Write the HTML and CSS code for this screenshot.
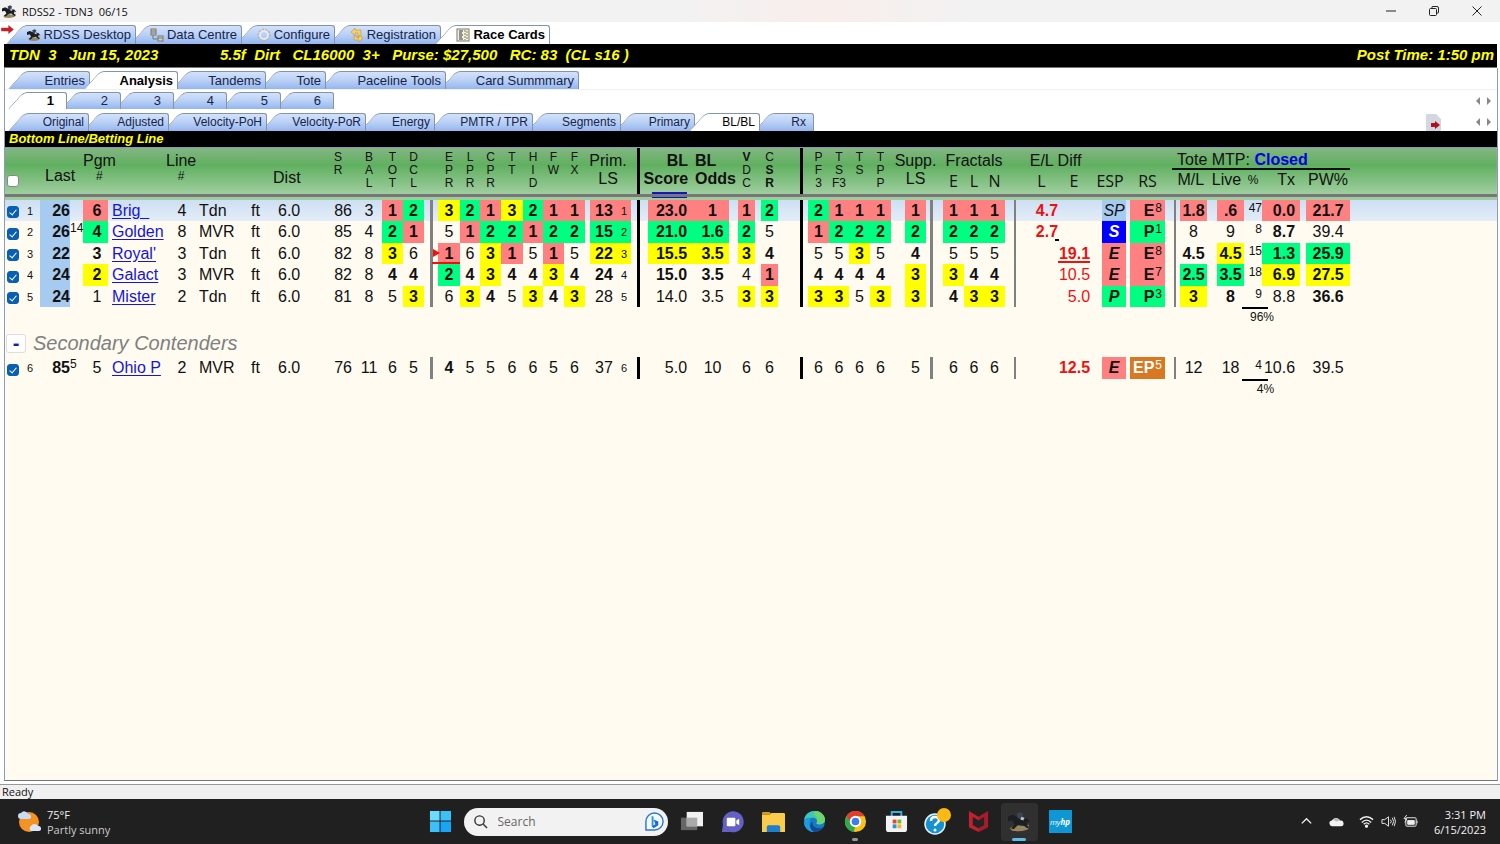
FILE: index.html
```html
<!DOCTYPE html>
<html lang="en">
<head>
    <meta charset="UTF-8">
    <meta name="viewport" content="width=device-width, initial-scale=1.0">
    <title>RDSS2 - TDN3 06/15</title>
    <link rel="stylesheet" href="styles.css">
</head>
<body>
    <!-- shared icons -->
    <svg class="defs" width="0" height="0">
        <symbol id="horse" viewBox="0 0 24 24">
            <path d="M2 19q4-4 9-3 6 2 11-1l-1 5q-6 3-13 2-4 0-6-3z" fill="#8d8a68"/>
            <path d="M0 7l5-2 4 2 6 1 5 1 3 4-3-1-1 3 3 3-2 1-5-4-5 1-4 4-3-1 4-4-2-4-2 0-3 1z" fill="#1b1e22"/>
            <path d="M9 4l4-2 3 2-1 3 4 2-6 1-3-2z" fill="#3c4550"/>
            <path d="M14 7l3 1-1 3-3-1z" fill="#b9c4cf"/>
            <path d="M4 21q8-3 16-1" stroke="#c0743a" fill="none"/>
        </symbol>
    </svg>

    <header class="titlebar">
        <svg class="app-icon"><use href="#horse"/></svg>
        <span class="title">RDSS2 - TDN3&nbsp; 06/15</span>
        <button class="win-btn" aria-label="Minimize"><svg viewBox="0 0 12 12"><path d="M1 6h10"/></svg></button>
        <button class="win-btn" aria-label="Restore"><svg viewBox="0 0 12 12"><rect x="1.500" y="3.500" width="7" height="7" rx="1"/><path d="M4 3.500V2q0-.5.5-.5H9q1.500 0 1.500 1.500v4.500q0 .5-.5.5H9"/></svg></button>
        <button class="win-btn" aria-label="Close"><svg viewBox="0 0 12 12"><path d="M1.500 1.500l9 9M10.500 1.500l-9 9"/></svg></button>
    </header>

    <nav class="tabs tabs-main">
        <svg class="marker" viewBox="0 0 14 10"><path d="M0 3h8V0l6 5-6 5V7H0z" fill="#c4202c"/></svg>
        <button class="tab"><svg class="tab-icon"><use href="#horse"/></svg>RDSS Desktop</button>
        <button class="tab"><svg class="tab-icon" viewBox="0 0 14 14" fill="#d6d3b8" stroke="#777"><path d="M3 5v6h5" fill="none"/><rect x="1" y="1" width="5" height="6"/><path d="M1 3h5M1 5h5"/><rect x="8" y="8" width="5" height="5"/><path d="M8 10h5"/></svg>Data Centre</button>
        <button class="tab"><svg class="tab-icon" viewBox="0 0 14 14" fill="none"><circle cx="7" cy="7" r="5" stroke="#b5b5b5" stroke-width="3" stroke-dasharray="2 1"/><circle cx="7" cy="7" r="4" stroke="#e9e9e9" stroke-width="2"/></svg>Configure</button>
        <button class="tab"><svg class="tab-icon" viewBox="0 0 14 14" fill="#f7cf68" stroke="#b98a24" stroke-width=".5"><path d="M1 4l4-4v2h6v7H8V5H5v3z"/><path d="M13 10l-4 4v-2H4V8h3v2h2V7z"/></svg>Registration</button>
        <button class="tab active"><svg class="tab-icon" viewBox="0 0 14 14"><rect x="1" y="1" width="12" height="12" fill="#f4f2e4" stroke="#777"/><path d="M3 3h4M3 5h3M3 7h4M3 9h3M3 11h4" stroke="#333"/><path d="M9 2v10M11 3v8" stroke="#887f3c" stroke-dasharray="2 1"/></svg>Race Cards</button>
    </nav>

    <div class="race-bar">
        <span class="race-date">TDN&nbsp; 3&nbsp;&nbsp; Jun 15, 2023</span>
        <span>5.5f&nbsp; Dirt&nbsp;&nbsp; CL16000&nbsp; 3+&nbsp;&nbsp; Purse: $27,500&nbsp;&nbsp; RC: 83&nbsp; (CL s16 )</span>
        <span class="post-time">Post Time: 1:50 pm</span>
    </div>

    <main class="card">
        <nav class="tabs tabs-card">
            <button class="tab">Entries</button>
            <button class="tab active">Analysis</button>
            <button class="tab">Tandems</button>
            <button class="tab">Tote</button>
            <button class="tab">Paceline Tools</button>
            <button class="tab">Card Summmary</button>
        </nav>
        <nav class="tabs tabs-race">
            <button class="tab active">1</button>
            <button class="tab">2</button>
            <button class="tab">3</button>
            <button class="tab">4</button>
            <button class="tab">5</button>
            <button class="tab">6</button>
            <div class="scroll">
                <button aria-label="Previous race"><svg viewBox="0 0 4 8"><path d="M4 0v8L0 4z"/></svg></button>
                <button aria-label="Next race"><svg viewBox="0 0 4 8"><path d="M0 0v8l4-4z"/></svg></button>
            </div>
        </nav>
        <nav class="tabs tabs-view">
            <button class="tab">Original</button>
            <button class="tab">Adjusted</button>
            <button class="tab">Velocity-PoH</button>
            <button class="tab">Velocity-PoR</button>
            <button class="tab">Energy</button>
            <button class="tab">PMTR / TPR</button>
            <button class="tab">Segments</button>
            <button class="tab">Primary</button>
            <button class="tab active">BL/BL</button>
            <button class="tab">Rx</button>
            <div class="scroll">
                <button class="export" aria-label="Export"><svg viewBox="0 0 15 17"><path d="M0 0h11l4 4v13H0z" fill="#d3d7e2"/><path d="M10 0l5 5V0z" fill="#fff"/><path d="M5 9h4V7l5 4-5 4v-2H5z" fill="#b0101c"/></svg></button>
                <button aria-label="Previous view"><svg viewBox="0 0 4 8"><path d="M4 0v8L0 4z"/></svg></button>
                <button aria-label="Next view"><svg viewBox="0 0 4 8"><path d="M0 0v8l4-4z"/></svg></button>
            </div>
        </nav>

        <h1 class="view-title">Bottom Line/Betting Line</h1>

        <table class="lines">
            <colgroup>
                <col class="w17"><col class="w18"><col class="w30"><col class="w13"><col class="w25"><col class="w58"><col class="w28"><col class="w52"><col class="w24"><col class="w50">
                <col class="w36"><col class="w26"><col class="w21"><col class="w21"><col class="w14">
                <col class="w22"><col class="w20"><col class="w21"><col class="w22"><col class="w20"><col class="w21"><col class="w21"><col class="w32"><col class="w14"><col class="w9">
                <col class="w50"><col class="w48"><col class="w17"><col class="w23"><col class="w30">
                <col class="w21"><col class="w20"><col class="w21"><col class="w21"><col class="w35"><col class="w17">
                <col class="w21"><col class="w20"><col class="w21"><col class="w20">
                <col class="w33"><col class="w32"><col class="w40"><col class="w35"><col class="w15">
                <col class="w27"><col class="w37"><col class="w18"><col class="w44"><col class="w44"><col>
            </colgroup>
            <thead>
                <tr class="head-top">
                    <th rowspan="2" colspan="2" class="check-all"><input type="checkbox" aria-label="Select all"></th>
                    <th rowspan="2" colspan="2" class="last-head">Last</th>
                    <th rowspan="2" colspan="2" class="two left"><span>Pgm<small>#</small></span></th>
                    <th rowspan="2" colspan="3" class="two left"><span>Line<small>#</small></span></th>
                    <th rowspan="2" class="dist-head">Dist</th>
                    <th rowspan="2" class="vert">S<br>R</th>
                    <th rowspan="2" class="vert">B<br>A<br>L</th>
                    <th rowspan="2" class="vert">T<br>O<br>T</th>
                    <th rowspan="2" class="vert">D<br>C<br>L</th>
                    <th rowspan="2"></th>
                    <th rowspan="2" class="vert">E<br>P<br>R</th>
                    <th rowspan="2" class="vert">L<br>P<br>R</th>
                    <th rowspan="2" class="vert">C<br>P<br>R</th>
                    <th rowspan="2" class="vert">T<br>T</th>
                    <th rowspan="2" class="vert">H<br>I<br>D</th>
                    <th rowspan="2" class="vert">F<br>W</th>
                    <th rowspan="2" class="vert">F<br>X</th>
                    <th rowspan="2" colspan="2" class="two">Prim.<br>LS</th>
                    <th rowspan="2" class="bar-prim"></th>
                    <th rowspan="2" class="two bl sorted">BL<br>Score</th>
                    <th rowspan="2" class="two bl odds-head">BL<br>Odds</th>
                    <th rowspan="2" class="vert"><b>V</b><br>D<br>C</th>
                    <th rowspan="2" class="vert csr">C<br><b>S</b><br><b>R</b></th>
                    <th rowspan="2" class="bar-bl"></th>
                    <th rowspan="2" class="vert">P<br>F<br>3</th>
                    <th rowspan="2" class="vert">T<br>S<br>F3</th>
                    <th rowspan="2" class="vert">T<br>S</th>
                    <th rowspan="2" class="vert">T<br>P<br>P</th>
                    <th rowspan="2" colspan="2" class="two supp-head">Supp.<br>LS</th>
                    <th colspan="3">Fractals</th>
                    <th></th>
                    <th colspan="2" class="diff-head">E/L Diff</th>
                    <th colspan="2"></th>
                    <th colspan="6" class="tote"><div>Tote MTP: <b>Closed</b></div></th>
                    <th></th>
                </tr>
                <tr class="head-low">
                    <th class="ui">E</th>
                    <th class="ui">L</th>
                    <th class="ui">N</th>
                    <th></th>
                    <th class="ui">L</th>
                    <th class="ui">E</th>
                    <th class="ui">ESP</th>
                    <th class="ui">RS</th>
                    <th colspan="2" class="ml-head">M/L</th>
                    <th class="live-head">Live</th>
                    <th class="small">%</th>
                    <th class="tx-head">Tx</th>
                    <th>PW%</th>
                    <th></th>
                </tr>
            </thead>
            <tbody>
                <tr class="horse selected">
                    <td><input type="checkbox" aria-label="Brig" checked></td><td class="idx">1</td><td class="last">26</td><td class="ago"></td><td class="pgm r">6</td><td class="name"><a href="#">Brig&nbsp;&nbsp;</a></td><td class="line">4</td><td class="trk">Tdn</td><td class="trk">ft</td><td class="dist">6.0</td>
                    <td class="sr">86</td><td>3</td><td class="r">1</td><td class="g">2</td><td class="bar-tot"></td>
                    <td class="y">3</td><td class="g">2</td><td class="r">1</td><td class="y">3</td><td class="g">2</td><td class="r">1</td><td class="r">1</td><td class="ls r">13</td><td class="rank r">1</td><td class="bar-prim"></td>
                    <td class="score r">23.0</td><td class="odds r">1</td><td class="r">1</td><td class="csr g">2</td><td class="bar-bl"></td>
                    <td class="g">2</td><td class="r">1</td><td class="r">1</td><td class="r">1</td><td class="supp r">1</td><td class="bar-supp"></td>
                    <td class="r">1</td><td class="r">1</td><td class="r">1</td><td class="bar-frac"></td>
                    <td class="diff b">4.7</td><td class="diff"></td><td class="esp sp">SP</td><td class="rs r">E<sup>8</sup></td><td class="bar-rs"></td>
                    <td class="r">1.8</td><td class="live r">.6</td><td class="pct">47</td><td class="tx r">0.0</td><td class="r">21.7</td><td></td>
                </tr>
                <tr class="horse">
                    <td><input type="checkbox" aria-label="Golden" checked></td><td class="idx">2</td><td class="last">26</td><td class="ago">14</td><td class="pgm g">4</td><td class="name"><a href="#">Golden</a></td><td class="line">8</td><td class="trk">MVR</td><td class="trk">ft</td><td class="dist">6.0</td>
                    <td class="sr">85</td><td>4</td><td class="g">2</td><td class="r">1</td><td class="bar-tot"></td>
                    <td>5</td><td class="r">1</td><td class="g">2</td><td class="g">2</td><td class="r">1</td><td class="g">2</td><td class="g">2</td><td class="ls g">15</td><td class="rank g">2</td><td class="bar-prim"></td>
                    <td class="score g">21.0</td><td class="odds g">1.6</td><td class="g">2</td><td class="csr">5</td><td class="bar-bl"></td>
                    <td class="r">1</td><td class="g">2</td><td class="g">2</td><td class="g">2</td><td class="supp g">2</td><td class="bar-supp"></td>
                    <td class="g">2</td><td class="g">2</td><td class="g">2</td><td class="bar-frac"></td>
                    <td class="diff b tick">2.7</td><td class="diff"></td><td class="esp s">S</td><td class="rs g">P<sup>1</sup></td><td class="bar-rs"></td>
                    <td>8</td><td class="live">9</td><td class="pct">8</td><td class="tx b">8.7</td><td>39.4</td><td></td>
                </tr>
                <tr class="horse">
                    <td><input type="checkbox" aria-label="Royal'" checked></td><td class="idx">3</td><td class="last">22</td><td class="ago"></td><td class="pgm b">3</td><td class="name"><a href="#">Royal'</a></td><td class="line">3</td><td class="trk">Tdn</td><td class="trk">ft</td><td class="dist">6.0</td>
                    <td class="sr">82</td><td>8</td><td class="y">3</td><td>6</td><td class="bar-tot"></td>
                    <td class="r flag">1</td><td>6</td><td class="y">3</td><td class="r">1</td><td>5</td><td class="r">1</td><td>5</td><td class="ls y">22</td><td class="rank y">3</td><td class="bar-prim"></td>
                    <td class="score y">15.5</td><td class="odds y">3.5</td><td class="y">3</td><td class="csr b">4</td><td class="bar-bl"></td>
                    <td>5</td><td>5</td><td class="y">3</td><td>5</td><td class="supp b">4</td><td class="bar-supp"></td>
                    <td>5</td><td>5</td><td>5</td><td class="bar-frac"></td>
                    <td class="diff"></td><td class="diff b top-diff">19.1</td><td class="esp r">E</td><td class="rs r">E<sup>8</sup></td><td class="bar-rs"></td>
                    <td class="b">4.5</td><td class="live y">4.5</td><td class="pct">15</td><td class="tx g">1.3</td><td class="g">25.9</td><td></td>
                </tr>
                <tr class="horse">
                    <td><input type="checkbox" aria-label="Galact" checked></td><td class="idx">4</td><td class="last">24</td><td class="ago"></td><td class="pgm y">2</td><td class="name"><a href="#">Galact</a></td><td class="line">3</td><td class="trk">MVR</td><td class="trk">ft</td><td class="dist">6.0</td>
                    <td class="sr">82</td><td>8</td><td class="b">4</td><td class="b">4</td><td class="bar-tot"></td>
                    <td class="g">2</td><td class="b">4</td><td class="y">3</td><td class="b">4</td><td class="b">4</td><td class="y">3</td><td class="b">4</td><td class="ls b">24</td><td class="rank b">4</td><td class="bar-prim"></td>
                    <td class="score b">15.0</td><td class="odds b">3.5</td><td>4</td><td class="csr r">1</td><td class="bar-bl"></td>
                    <td class="b">4</td><td class="b">4</td><td class="b">4</td><td class="b">4</td><td class="supp y">3</td><td class="bar-supp"></td>
                    <td class="y">3</td><td class="b">4</td><td class="b">4</td><td class="bar-frac"></td>
                    <td class="diff"></td><td class="diff">10.5</td><td class="esp r">E</td><td class="rs r">E<sup>7</sup></td><td class="bar-rs"></td>
                    <td class="g">2.5</td><td class="live g">3.5</td><td class="pct">18</td><td class="tx y">6.9</td><td class="y">27.5</td><td></td>
                </tr>
                <tr class="horse">
                    <td><input type="checkbox" aria-label="Mister" checked></td><td class="idx">5</td><td class="last">24</td><td class="ago"></td><td class="pgm">1</td><td class="name"><a href="#">Mister</a></td><td class="line">2</td><td class="trk">Tdn</td><td class="trk">ft</td><td class="dist">6.0</td>
                    <td class="sr">81</td><td>8</td><td>5</td><td class="y">3</td><td class="bar-tot"></td>
                    <td>6</td><td class="y">3</td><td class="b">4</td><td>5</td><td class="y">3</td><td class="b">4</td><td class="y">3</td><td class="ls">28</td><td class="rank">5</td><td class="bar-prim"></td>
                    <td class="score">14.0</td><td class="odds">3.5</td><td class="y">3</td><td class="csr y">3</td><td class="bar-bl"></td>
                    <td class="y">3</td><td class="y">3</td><td>5</td><td class="y">3</td><td class="supp y">3</td><td class="bar-supp"></td>
                    <td class="b">4</td><td class="y">3</td><td class="y">3</td><td class="bar-frac"></td>
                    <td class="diff"></td><td class="diff">5.0</td><td class="esp g">P</td><td class="rs g">P<sup>3</sup></td><td class="bar-rs"></td>
                    <td class="y">3</td><td class="live b">8</td><td class="pct">9</td><td class="tx">8.8</td><td class="b">36.6</td><td></td>
                </tr>
                <tr class="total">
                    <td colspan="47"></td><td colspan="2"><span>96%</span></td><td colspan="2"></td>
                </tr>
            </tbody>
            <tbody>
                <tr class="group">
                    <td colspan="51"><button class="toggle" aria-label="Collapse">-</button><h2>Secondary Contenders</h2></td>
                </tr>
                <tr class="horse">
                    <td><input type="checkbox" aria-label="Ohio P" checked></td><td class="idx">6</td><td class="last plain">85</td><td class="ago">5</td><td class="pgm">5</td><td class="name"><a href="#">Ohio P</a></td><td class="line">2</td><td class="trk">MVR</td><td class="trk">ft</td><td class="dist">6.0</td>
                    <td class="sr">76</td><td>11</td><td>6</td><td>5</td><td class="bar-tot"></td>
                    <td class="b">4</td><td>5</td><td>5</td><td>6</td><td>6</td><td>5</td><td>6</td><td class="ls">37</td><td class="rank">6</td><td class="bar-prim"></td>
                    <td class="score">5.0</td><td class="odds">10</td><td>6</td><td class="csr">6</td><td class="bar-bl"></td>
                    <td>6</td><td>6</td><td>6</td><td>6</td><td class="supp">5</td><td class="bar-supp"></td>
                    <td>6</td><td>6</td><td>6</td><td class="bar-frac"></td>
                    <td class="diff"></td><td class="diff b">12.5</td><td class="esp r">E</td><td class="rs ep">EP<sup>5</sup></td><td class="bar-rs"></td>
                    <td>12</td><td class="live">18</td><td class="pct">4</td><td class="tx">10.6</td><td>39.5</td><td></td>
                </tr>
                <tr class="total">
                    <td colspan="47"></td><td colspan="2"><span>4%</span></td><td colspan="2"></td>
                </tr>
            </tbody>
        </table>
    </main>

    <div class="status">Ready</div>

    <footer class="taskbar">
        <div class="weather">
            <svg viewBox="0 0 24 24"><circle cx="12" cy="12" r="10" fill="#f59222"/><path d="M4 9a3 3 0 0 1 0-6 4 4 0 0 1 7 1 2.500 2.500 0 0 1 1 5z" fill="#c9dcf7"/><path d="M14 21a3 3 0 0 1 0-5 4 4 0 0 1 7 0 2.500 2.500 0 0 1 1 5z" fill="#d9e6fa"/></svg>
            <div>75°F<span>Partly sunny</span></div>
        </div>
        <div class="apps">
            <button class="app" aria-label="Start"><svg viewBox="0 0 24 24" fill="#3cc0f7"><path d="M1 1h10v10H1z" fill="#6bdcff"/><path d="M12 1h11v10H12z"/><path d="M1 12h10v11H1z"/><path d="M12 12h11v11H12z" fill="#1ba3f5"/></svg></button>
            <label class="search">
                <svg viewBox="0 0 16 16" fill="none" stroke="#333" stroke-width="1.500"><circle cx="7" cy="7" r="5"/><path d="M11 11l4 4"/></svg>
                <input type="text" placeholder="Search" aria-label="Search">
                <svg class="bing" viewBox="0 0 20 20"><path d="M1 19V10a9 9 0 1 1 9 9z" fill="#f4f9ff" stroke="#2a77cf" stroke-width="1.500"/><path d="M7 4l2 1v9l-2 1z" fill="#2496e8"/><path d="M9 8l5 2v4l-5 3-2-2 4-2z" fill="#1c6ad4"/></svg>
            </label>
            <button class="app" aria-label="Task view"><svg viewBox="0 0 24 24"><path d="M1 8h17v13H1z" fill="#666"/><path d="M7 2h17v15H7z" fill="#f1f1f1"/><path d="M7 8h11v9H7z" fill="#aaa"/></svg></button>
            <button class="app" aria-label="Chat"><svg viewBox="0 0 24 24"><path d="M1 23l1-8a11 11 0 1 1 8 8z" fill="#6460c4"/><rect x="6" y="8" width="9" height="9" rx="1" fill="#fff"/><path d="M16 11l3-2v7l-3-2z" fill="#fff"/></svg></button>
            <button class="app" aria-label="File Explorer"><svg viewBox="0 0 24 24"><path d="M0 3q0-1 1-1h7l2 3h-10z" fill="#d69a17"/><path d="M0 5h8l2-2h13l1 1v19H0z" fill="#fbcb4b"/><path d="M5 23v-5q0-2 2-2h10q2 0 2 2v5z" fill="#1e7fce"/></svg></button>
            <button class="app" aria-label="Edge"><svg viewBox="0 0 24 24"><circle cx="12" cy="12" r="11" fill="#1979c9"/><path d="M1 11C2 3 8 1 12 1c7 0 11 5 11 9 0 5-6 6-9 4 2-4-1-6-4-6-4 0-8 1-9 3z" fill="#40c7b6"/><path d="M13 1c6 0 10 5 10 9 0 5-6 6-9 4 2-4 1-8-3-9z" fill="#6bd66c"/><path d="M8 9c-3 5-1 12 5 14-9 1-14-8-11-13 2-3 5-2 6-1z" fill="#1b9de0"/><path d="M10 12c-1 5 4 9 11 6-3 4-7 5-9 5-5-2-6-8-2-11z" fill="#124b91"/></svg></button>
            <button class="app running" aria-label="Chrome"><svg viewBox="0 0 24 24"><circle cx="12" cy="12" r="11" fill="#fbc116"/><path d="M2.500 6.500A11 11 0 0 1 21.500 6.500H12L7 14z" fill="#e33b2e"/><path d="M2.500 6.500L8 15l4 2-2 6A11 11 0 0 1 2.500 6.500z" fill="#2da94f"/><circle cx="12" cy="12" r="6" fill="#fff"/><circle cx="12" cy="12" r="4" fill="#3b7ded"/></svg></button>
            <button class="app" aria-label="Microsoft Store"><svg viewBox="0 0 24 24"><path d="M7 7V2h10v5" fill="none" stroke="#35b2e3" stroke-width="2"/><path d="M1 6h22v14q0 3-3 3H4q-3 0-3-3z" fill="#f3f3f3"/><path d="M8 10h4v4H8z" fill="#e5492c"/><path d="M13 10h4v4h-4z" fill="#7bb52c"/><path d="M8 15h4v4H8z" fill="#2795dc"/><path d="M13 15h4v4h-4z" fill="#f7b51c"/></svg></button>
            <button class="app" aria-label="Help"><svg class="help-icon" viewBox="0 0 28 28"><circle cx="12" cy="16" r="10" fill="#1593d0" stroke="#e8f5fb" stroke-width="1.500"/><path d="M8 13q0-4 4-4t4 3q0 2-2 3t-2 3" fill="none" stroke="#fff" stroke-width="2.500"/><circle cx="12" cy="22" r="1.500" fill="#fff"/><circle cx="21" cy="7" r="7" fill="#fdb913"/></svg></button>
            <button class="app" aria-label="McAfee"><svg viewBox="0 0 24 24"><path d="M2 1l10 6 10-6v17l-10 5-10-5z" fill="#c3202f"/><path d="M6 7l6 4 6-4v9l-6 3-6-3z" fill="#242424"/><path d="M12 7v4l6-4v9l-6 3v4l10-5V1z" fill="#8f1524" opacity=".5"/></svg></button>
            <button class="app current" aria-label="RDSS2"><svg><use href="#horse"/></svg></button>
            <button class="app" aria-label="myHP"><span class="myhp">my<b>hp</b></span></button>
        </div>
        <div class="tray">
            <svg class="chev" viewBox="0 0 16 16"><path d="M3 10l5-5 5 5" fill="none" stroke="#eee" stroke-width="1.500"/></svg>
            <svg class="cloud" viewBox="0 0 16 16"><path d="M4 13a3 3 0 0 1-1-6 5 5 0 0 1 9 0 3 3 0 0 1 1 6z" fill="#f2f2f2"/><path d="M4 6a5 4 0 0 1 8 1l-4 1z" fill="#bbb"/></svg>
            <svg viewBox="0 0 16 16" fill="none" stroke="#eee" stroke-width="1.500"><path d="M1 6q7-6 14 0M3 9q5-5 10 0M5 11q3-3 6 0"/><circle cx="8" cy="13" r="1" fill="#eee"/></svg>
            <svg viewBox="0 0 16 16" fill="none" stroke="#eee"><path d="M1 6h3l4-3v10l-4-3H1zM10 6q2 2 0 4M12 4q3 4 0 8M14 3q3 5 0 10"/></svg>
            <svg viewBox="0 0 16 16" fill="none" stroke="#eee"><rect x="3" y="4" width="11" height="9" rx="1"/><path d="M5 7h7v4H5z" fill="#eee"/><path d="M15 7v3M4 1L1 5h3L2 9"/></svg>
            <div class="clock">3:31 PM<br>6/15/2023</div>
        </div>
    </footer>
</body>
</html>
```
FILE: styles.css
```css
*, *::before, *::after { box-sizing: border-box; }
body {
    margin: 0;
    min-height: 100vh;
    display: flex;
    flex-direction: column;
    background-color: #fff;
    font-family: "Liberation Sans", Arial, sans-serif;
    font-size: 16px;
    color: #111;
}
button {
    border: 0;
    padding: 0;
    background: none;
    font: inherit;
    color: inherit;
}
.defs { position: absolute; }

/* window title */
.titlebar {
    display: flex;
    align-items: center;
    height: 22px;
    padding-right: 2px;
    background: linear-gradient(to right, #f2f2f2 45%, #f8eeec 55%, #f2f2f2 65%);
    font-family: "Open Sans", "Noto Sans", sans-serif;
    font-size: 11px;
}
.app-icon { width: 15px; height: 15px; margin: 0 5px 0 2px; }
.title { flex: 1; }
.win-btn { width: 43px; height: 20px; display: flex; align-items: center; justify-content: center; }
.win-btn svg { width: 12px; height: 12px; fill: none; stroke: #222; }

/* tabs */
.tabs {
    display: grid;
    position: relative;
    isolation: isolate;
    font-size: 13px;
}
.tab {
    position: relative;
    display: flex;
    align-items: center;
    justify-content: flex-end;
    padding-right: 5px;
    white-space: nowrap;
    color: #15244a;
}
.tab::before, .tab::after {
    content: "";
    position: absolute;
    z-index: -1;
    top: 0;
    bottom: 0;
    background: linear-gradient(#d3e2fa, #b9d0f6 50%, #94b6ee);
    border-top: 1px solid #8493ac;
}
.tab::before {
    z-index: -2;
    left: -6px;
    width: 22px;
    border-left: 1px solid #8493ac;
    border-top-left-radius: 5px;
    transform: skewX(-42deg);
    transform-origin: left bottom;
}
.tab::after {
    left: 16px;
    right: 0;
    border-right: 1px solid #8493ac;
    border-top-right-radius: 3px;
}
.tab.active { z-index: 1; font-weight: bold; color: #000; }
.tab.active::before, .tab.active::after { background: #fff; }
.tab-icon { width: 14px; height: 14px; margin-right: 3px; }

.tabs-main {
    grid-template-columns: 124px 106px 93px 106px 109px;
    grid-auto-rows: 19px;
    padding: 3px 0 0 12px;
}
.marker { position: absolute; left: 1px; top: 3px; width: 13px; height: 9px; }
.tabs-card {
    grid-template-columns: 76px 88px 88px 60px 120px 133px;
    grid-auto-rows: 18px;
    padding: 3px 0 0 9px;
    border-bottom: 1px solid #f0f0f0;
}
.tabs-race {
    grid-template-columns: 53px 54px 53px 53px 54px 53px 1fr;
    grid-auto-rows: 17px;
    padding: 2px 0 0 9px;
}
.tabs-race .tab { padding-right: 13px; }
.tabs-view {
    grid-template-columns: 75px 80px 98px 99px 69px 98px 88px 74px 65px 54px 1fr;
    grid-auto-rows: 18px;
    padding: 4px 0 0 9px;
    font-size: 12px;
}
.tabs-view .tab.active { font-weight: normal; }
.tabs-view .tab:nth-child(10) { padding-right: 8px; }
.scroll {
    display: flex;
    align-items: center;
    justify-content: flex-end;
    gap: 7px;
    padding-right: 6px;
}
.scroll svg { display: block; width: 4px; height: 8px; fill: #888; }
.scroll .export { margin-right: 28px; }
.scroll .export svg { width: 15px; height: 17px; }

/* race summary */
.race-bar {
    display: flex;
    align-items: center;
    height: 24px;
    margin: 0 3px 0 4px;
    padding: 0 3px 2px 5px;
    background-color: #000;
    border-bottom: 1px solid #777;
    color: #ff0;
    font-size: 15px;
    font-weight: bold;
    font-style: italic;
}
.race-date { width: 211px; }
.post-time { margin-left: auto; }
.card {
    flex: 1;
    margin: 0 2px 0 4px;
    border: 1px solid #8c9cb8;
    border-top: 0;
    border-bottom-color: #777;
    background: linear-gradient(#fff 63px, #fffbf0 63px);
}
.view-title {
    margin: 0;
    padding-left: 4px;
    height: 17px;
    line-height: 16px;
    background-color: #000;
    border-bottom: 1px solid #7b9cc0;
    color: #ff0;
    font-size: 13px;
    font-style: italic;
}

/* betting lines */
.lines {
    width: 100%;
    table-layout: fixed;
    border-spacing: 0;
}
.w9 { width: 9px; }
.w13 { width: 13px; }
.w14 { width: 14px; }
.w15 { width: 15px; }
.w17 { width: 17px; }
.w18 { width: 18px; }
.w20 { width: 20px; }
.w21 { width: 21px; }
.w22 { width: 22px; }
.w23 { width: 23px; }
.w24 { width: 24px; }
.w25 { width: 25px; }
.w26 { width: 26px; }
.w27 { width: 27px; }
.w28 { width: 28px; }
.w30 { width: 30px; }
.w32 { width: 32px; }
.w33 { width: 33px; }
.w35 { width: 35px; }
.w36 { width: 36px; }
.w37 { width: 37px; }
.w40 { width: 40px; }
.w44 { width: 44px; }
.w48 { width: 48px; }
.w50 { width: 50px; }
.w52 { width: 52px; }
.w58 { width: 58px; }

.lines th, .lines td {
    padding: 0;
    line-height: 20px;
    text-align: center;
    white-space: nowrap;
}
.lines thead {
    background: linear-gradient(#83b583, #60b060 17px, #a0cea0 46px, #777 46px, #777 49px, #9fcb9f 49px);
}
.lines th { font-weight: normal; vertical-align: top; }
.head-top { height: 22px; }
.lines .head-top th { line-height: 18px; padding-top: 4px; }
.head-low { height: 30px; }
.lines .head-top .vert { padding-top: 3px; font-size: 12px; line-height: 13px; }
.lines .left { text-align: left; }
.two span { display: inline-block; text-align: center; vertical-align: top; }
.two small { display: block; font-size: 12px; line-height: 12px; }
.lines .head-top .check-all { padding: 25px 0 0 2px; text-align: left; }
.lines .head-top .last-head { padding: 19px 0 0 5px; text-align: left; }
.lines .head-top .dist-head { padding: 21px 0 0 3px; text-align: left; }
.lines .bl { font-weight: bold; text-align: right; padding-right: 2px; }
.lines .odds-head { text-align: left; padding-left: 5px; }
.lines .diff-head { padding-right: 4px; }
.lines .supp-head { padding-right: 3px; }
.sorted { position: relative; }
.sorted::after {
    content: "";
    position: absolute;
    right: 3px;
    top: 44px;
    width: 35px;
    height: 6px;
    border: solid #1414c0;
    border-width: 2px 0 1px;
}
.lines .head-top .tote { padding: 0 0 0 7px; text-align: left; }
.tote div { padding-left: 5px; border-bottom: 2px solid #111; height: 22px; line-height: 23px; }
.tote b { color: #0000e0; }
.lines .ui { font-family: "Open Sans", "Noto Sans", sans-serif; line-height: 22px; }
.lines .ml-head { text-align: right; padding-right: 3px; }
.lines .small { font-size: 12px; }
.lines .tx-head { text-align: right; padding-right: 11px; }

.horse { height: 22px; }
.horse:nth-child(odd) { height: 21px; }
.selected { background: linear-gradient(#cddff3, #e4edf8); }
.horse .sr { text-align: right; padding-right: 4px; }
.lines td { background-clip: padding-box; }
.lines .idx { font-size: 11px; padding-right: 2px; }
.last { background-color: #a6caf0; font-weight: bold; }
.last.plain { background: none; }
.lines .last { text-align: right; }
.lines .ago {
    font-size: 12px;
    text-align: left;
    vertical-align: top;
    line-height: 15px;
}
.horse .pgm { padding-left: 3px; }
.lines .name { text-align: left; padding-left: 4px; }
.name a { color: #1414dc; text-underline-offset: 2px; }
.horse .line { padding-left: 4px; }
.lines .trk { text-align: left; padding-left: 5px; }
.lines .dist { text-align: left; padding-left: 8px; }
.lines .ls { border-left: 5px solid transparent; text-align: left; padding-left: 5px; }
.lines .rank { font-size: 11px; font-weight: normal; }
.lines .score { border-left: 8px solid transparent; text-align: right; padding-right: 3px; }
.horse .odds { border-right: 9px solid transparent; padding-left: 6px; }
.horse .csr { border-left: 6px solid transparent; }
.lines th.csr { padding-left: 6px; }
.horse .supp { border-left: 14px solid transparent; }
.lines .diff { color: #f01010; text-align: right; }
.horse .esp { border: solid transparent; border-width: 0 4px 0 12px; font-weight: bold; font-style: italic; }
.lines .esp.sp { background-color: #a6caf0; font-weight: normal; }
.lines .esp.s { background-color: #00f; color: #fff; }
.lines .rs { text-align: right; padding-right: 3px; font-weight: bold; }
.rs sup { font-size: 12px; line-height: 10px; font-weight: normal; vertical-align: 4px; margin-left: 1px; }
.lines .ep { background-color: #d87820; color: #fff; }
.horse .live, .head-low .live-head { border-left: 10px solid transparent; }
.head-low .live-head { border-left-width: 2px; }
.lines .pct { font-size: 12px; text-align: right; vertical-align: top; line-height: 16px; }
.lines .tx { border-right: 6px solid transparent; text-align: right; padding-right: 5px; }

.r { background-color: #ff8080; }
.g { background-color: #00ff80; }
.y { background-color: #ff0; }
.r, .g, .y, .b { font-weight: bold; }

/* lines between the column groups */
.bar-tot { background: linear-gradient(#808080, #808080) 6px 0 / 3px 100% no-repeat; }
.bar-prim { background: linear-gradient(#000, #000) 6px 0 / 3px 100% no-repeat; }
.bar-bl { background: linear-gradient(#000, #000) 22px 0 / 3px 100% no-repeat; }
th.bar-prim, th.bar-bl { background-size: 3px 46px; }
.bar-supp { background: linear-gradient(#808080, #808080) 4px 0 / 3px 100% no-repeat; }
.bar-frac { background: linear-gradient(#808080, #808080) 9px 0 / 2px 100% no-repeat; }
.bar-rs { background: linear-gradient(#808080, #808080) 9px 0 / 2px 100% no-repeat; }

.flag, .tick, .top-diff { position: relative; }
.flag::before {
    content: "";
    position: absolute;
    left: -5px;
    top: 6px;
    border: 4px solid transparent;
    border-left: 7px solid #f01010;
    border-right: 0;
}
.flag::after {
    content: "";
    position: absolute;
    left: -6px;
    right: 0;
    bottom: 0;
    height: 2px;
    background-color: #f01010;
}
.tick::after {
    content: "";
    position: absolute;
    right: -1px;
    bottom: 2px;
    width: 4px;
    height: 2px;
    background-color: #000;
}
.top-diff::after {
    content: "";
    position: absolute;
    left: 0;
    right: 0;
    bottom: 1px;
    height: 2px;
    background-color: #f01010;
}

.lines input {
    appearance: none;
    display: block;
    position: relative;
    width: 12px;
    height: 12px;
    margin: 3px 0 0 2px;
    border: 1px solid #888;
    border-radius: 3px;
    background-color: #fff;
}
.lines input:checked { background-color: #0860b4; border-color: #0860b4; }
.lines input:checked::after {
    content: "";
    position: absolute;
    left: 3px;
    top: 1px;
    width: 4px;
    height: 7px;
    border: solid #fff;
    border-width: 0 1px 1px 0;
    transform: rotate(40deg);
}
.lines .check-all input { margin: 2px 0 0; }

.total { height: 22px; }
.lines .total td { vertical-align: top; text-align: left; font-size: 12px; }
.total span {
    display: block;
    width: 32px;
    margin-left: -2px;
    text-align: right;
    background: linear-gradient(#000, #000) 0 0 / 26px 2px no-repeat;
}
.group { height: 28px; }
.lines .group td { text-align: left; padding-left: 1px; }
.toggle {
    width: 20px;
    height: 19px;
    line-height: 16px;
    border: 1px solid #ddd;
    border-radius: 3px;
    background-color: #fff;
    color: #1414dc;
    font-size: 20px;
    font-weight: bold;
    vertical-align: middle;
}
.group h2 {
    display: inline-block;
    margin: 0 0 0 7px;
    color: #808080;
    font-size: 20px;
    font-weight: normal;
    font-style: italic;
    vertical-align: middle;
}

.status {
    height: 15px;
    margin-top: 3px;
    padding-left: 2px;
    line-height: 14px;
    background-color: #f0f0f0;
    border-top: 1px solid #999;
    font-family: "Open Sans", "Noto Sans", sans-serif;
    font-size: 11px;
}

/* taskbar */
.taskbar {
    display: grid;
    grid-template-columns: 1fr auto 1fr;
    align-items: center;
    height: 45px;
    background-color: #202020;
    color: #f2f2f2;
    font-family: "Open Sans", "Noto Sans", sans-serif;
    font-size: 11px;
    line-height: 15px;
}
.weather { display: flex; align-items: center; gap: 6px; padding-left: 17px; }
.weather svg { width: 24px; height: 24px; }
.weather span { display: block; color: #ccc; }
.apps { display: flex; align-items: center; }
.app {
    position: relative;
    width: 41px;
    height: 38px;
    display: flex;
    align-items: center;
    justify-content: center;
}
.app svg { width: 23px; height: 23px; }
.app .help-icon { width: 28px; height: 28px; }
.app.current::before {
    content: "";
    position: absolute;
    inset: 0 2px;
    border-radius: 4px;
    background-color: #303030;
}
.app.current svg { position: relative; }
.app.running::after, .app.current::after {
    content: "";
    position: absolute;
    bottom: 0;
    width: 6px;
    height: 3px;
    border-radius: 2px;
    background-color: #999;
}
.app.current::after { width: 14px; background-color: #5cbfe8; }
.myhp {
    width: 23px;
    height: 23px;
    line-height: 23px;
    background-color: #0e96d5;
    color: #fff;
    font-size: 8px;
    font-style: italic;
}
.search {
    display: flex;
    align-items: center;
    gap: 10px;
    width: 204px;
    height: 28px;
    margin: 0 3px;
    padding: 0 4px 0 9px;
    border-radius: 14px;
    background-color: #f2f2f2;
}
.search svg { width: 15px; height: 15px; flex: none; }
.search .bing { width: 19px; height: 19px; }
.search input {
    flex: 1;
    min-width: 0;
    border: 0;
    padding: 0;
    outline: none;
    background: none;
    font: inherit;
    font-size: 12px;
}
.search input::placeholder { color: #666; }
.tray {
    display: flex;
    align-items: center;
    justify-content: flex-end;
    gap: 7px;
    padding-right: 14px;
}
.tray svg { width: 15px; height: 15px; }
.tray .chev { margin-right: 8px; }
.tray .cloud { margin-right: 8px; }
.clock { width: 60px; text-align: right; margin-left: 1px; }
```
